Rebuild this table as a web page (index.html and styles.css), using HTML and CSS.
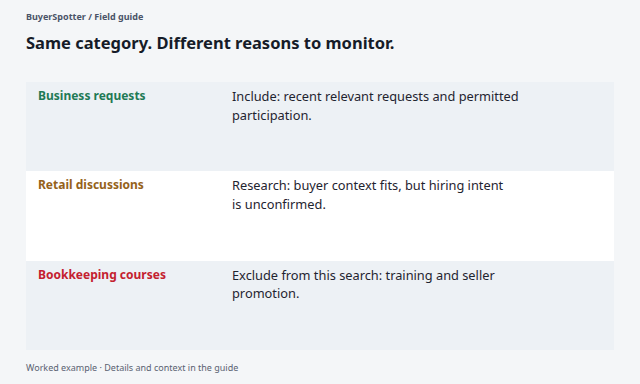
FILE: index.html
```html
<!DOCTYPE html>
<html lang="en">
<head>
<meta charset="utf-8">
<link rel="stylesheet" href="styles.css">
</head>
<body>
<main class="page">
  <div class="crumb">BuyerSpotter / Field guide</div>
  <h1 class="title">Same category. Different reasons to monitor.</h1>
  <div class="table">
    <div class="row shade">
      <div class="label green">Business requests</div>
      <div class="desc">Include: recent relevant requests and permitted participation.</div>
    </div>
    <div class="row">
      <div class="label amber">Retail discussions</div>
      <div class="desc">Research: buyer context fits, but hiring intent is&nbsp;unconfirmed.</div>
    </div>
    <div class="row shade">
      <div class="label red">Bookkeeping courses</div>
      <div class="desc">Exclude from this search: training and seller promotion.</div>
    </div>
  </div>
  <div class="foot">Worked example · Details and context in the guide</div>
</main>
</body>
</html>
```

FILE: styles.css
```css
html, body {
  margin: 0;
  padding: 0;
  background: #f4f6f8;
  font-family: "Noto Sans", "Open Sans", sans-serif;
}
.page {
  padding: 10px 26px 0 26px;
}
.crumb {
  font-size: 9px;
  font-weight: 700;
  color: #4a5468;
  line-height: 14px;
}
.title {
  margin: 8px 0 0 0;
  font-size: 16.5px;
  font-weight: 700;
  color: #161c28;
  line-height: 22px;
}
.table {
  margin-top: 28px;
}
.row {
  display: grid;
  grid-template-columns: 194px 290px;
  height: 89.4px;
  box-sizing: border-box;
  padding: 5px 12px;
  background: #ffffff;
}
.row.shade {
  background: #edf1f5;
}
.label {
  font-size: 12px;
  font-weight: 700;
  line-height: 18.6px;
}
.green { color: #1f7a55; }
.amber { color: #95621a; }
.red { color: #c4202f; }
.desc {
  font-size: 12.8px;
  line-height: 18.6px;
  color: #1f2430;
}
.foot {
  margin-top: 11px;
  font-size: 9px;
  color: #5a6272;
  line-height: 14px;
}
```
